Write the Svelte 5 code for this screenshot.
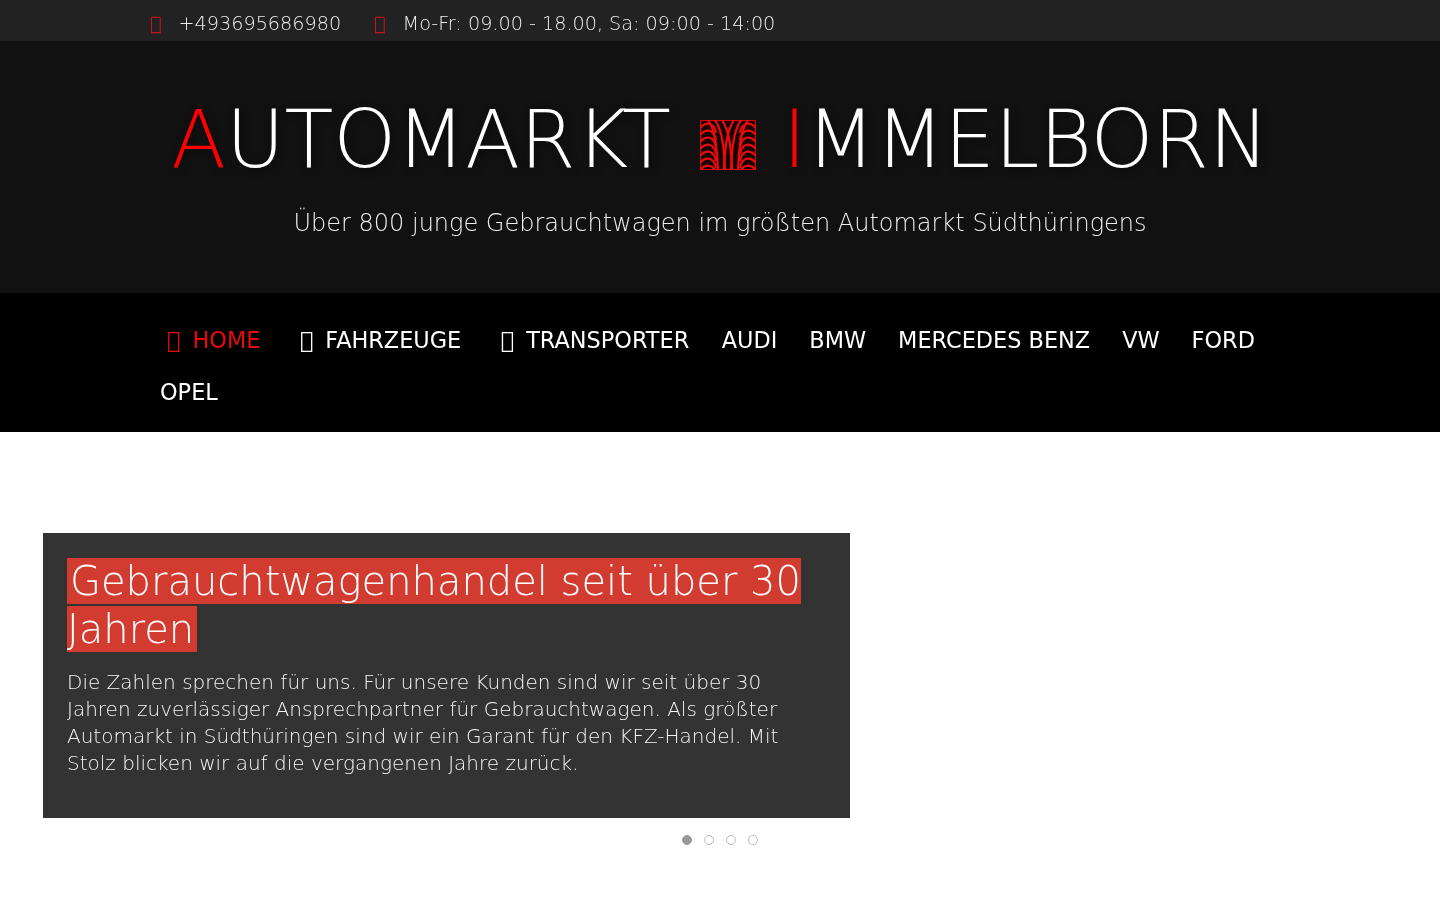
<script>
  const navItems = [
    { label: 'HOME', icon: '\uf015', active: true },
    { label: 'FAHRZEUGE', icon: '\uf1b9' },
    { label: 'TRANSPORTER', icon: '\uf0d1' },
    { label: 'AUDI' },
    { label: 'BMW' },
    { label: 'MERCEDES BENZ' },
    { label: 'VW' },
    { label: 'FORD' },
    { label: 'OPEL' }
  ];
  const dots = [0, 1, 2, 3];

  // arcs of the tyre tread in the logo, left half, mirrored in the markup
  const treadOuter = [4, 11, 18, 25, 32, 39, 46];
  const treadInner = [5, 12, 19];
</script>

<div class="topbar">
  <div class="container topbar-inner">
    <span class="info"><i class="icon">{'\uf095'}</i>+493695686980</span>
    <span class="info"><i class="icon">{'\uf017'}</i>Mo-Fr: 09.00 - 18.00, Sa: 09:00 - 14:00</span>
  </div>
</div>

<header class="masthead">
  <h1 class="brand">
    <span class="red">A</span>UTOMARKT
    <svg class="logo" viewBox="0 0 56 50" width="56" height="50" aria-hidden="true">
      <rect x="0.5" y="0.5" width="55" height="49" fill="#170303" stroke="#e00000" stroke-width="1" />
      <g fill="none" stroke="#ee0a0c" stroke-width="2.2">
        {#each treadOuter as y}
          <path d="M0 {y + 4} C6 {y - 3} 14 {y - 2} 16 {y + 9}" />
          <path d="M56 {y + 4} C50 {y - 3} 42 {y - 2} 40 {y + 9}" />
        {/each}
        {#each treadInner as x}
          <path d="M{x + 3} 0 C{x + 11} 12 {x + 12} 30 {x + 13} 50" />
          <path d="M{53 - x} 0 C{45 - x} 12 {44 - x} 30 {43 - x} 50" />
        {/each}
      </g>
    </svg>
    <span class="red">I</span>MMELBORN
  </h1>
  <p class="tagline">Über 800 junge Gebrauchtwagen im größten Automarkt Südthüringens</p>
</header>

<nav class="mainnav">
  <ul class="container">
    {#each navItems as item}
      <li class:active={item.active} class:has-icon={item.icon}>
        {#if item.icon}<i class="icon">{item.icon}</i>{/if}{item.label}
      </li>
    {/each}
  </ul>
</nav>

<section class="slider">
  <div class="slide">
    <h2><span>Gebrauchtwagenhandel seit über 30 Jahren</span></h2>
    <p>Die Zahlen sprechen für uns. Für unsere Kunden sind wir seit über 30 Jahren zuverlässiger Ansprechpartner für Gebrauchtwagen. Als größter Automarkt in Südthüringen sind wir ein Garant für den KFZ-Handel. Mit Stolz blicken wir auf die vergangenen Jahre zurück.</p>
  </div>
  <div class="dots">
    {#each dots as d}
      <span class="dot" class:current={d === 0}></span>
    {/each}
  </div>
</section>

<style>
  :global(body) {
    margin: 0;
    background: #fff;
    font-family: "DejaVu Sans", sans-serif;
  }

  /* own layer: the text gets greyscale antialiasing */
  :global(#app) {
    will-change: transform;
  }

  .container {
    width: 1140px;
    margin: 0 auto;
    box-sizing: border-box;
  }

  .icon {
    font-style: normal;
    font-family: "DejaVu Sans", sans-serif;
  }

  .topbar {
    background: #222;
    height: 41px;
  }

  .topbar-inner {
    display: flex;
    gap: 33px;
    height: 41px;
    font-size: 19.2px;
    line-height: 47px;
    font-weight: 200;
    color: #eee;
  }

  .info .icon {
    color: #c4151c;
    font-weight: 400;
    margin-right: 17px;
  }

  .masthead {
    background: #111;
    height: 252px;
    box-sizing: border-box;
    text-align: center;
    padding-top: 51px;
  }

  .brand {
    margin: 0;
    font-size: 80px;
    line-height: 96px;
    font-weight: 200;
    color: #fff;
    white-space: nowrap;
    text-shadow: 2px 2px 8px rgba(0, 0, 0, 0.4);
  }

  .red {
    color: #f00;
  }

  .logo {
    vertical-align: -3px;
    margin: 0 1px 0 4px;
  }

  .tagline {
    margin: 19px 0 0;
    font-size: 24px;
    line-height: 32px;
    font-weight: 200;
    color: #eee;
  }

  .mainnav {
    background: #000;
    height: 139px;
    box-sizing: border-box;
    padding-top: 21px;
  }

  .mainnav ul {
    display: flex;
    flex-wrap: wrap;
    list-style: none;
    padding: 0 10px;
    column-gap: 32px;
    margin: 0 auto;
  }

  .mainnav li {
    font-size: 22.4px;
    line-height: 52px;
    color: #fff;
    white-space: nowrap;
  }

  .mainnav li.has-icon {
    padding: 0 0.5px 0 7px;
  }

  .mainnav li .icon {
    margin-right: 12px;
  }

  .mainnav li.active {
    color: #e8090b;
  }

  .slider {
    padding-top: 101px;
  }

  .slide {
    width: 807px;
    height: 285px;
    margin-left: 43px;
    box-sizing: border-box;
    padding: 24px 24px;
    background: #333;
    color: #f5f5f5;
  }

  .slide h2 {
    margin: 0;
    font-size: 40px;
    line-height: 48px;
    font-weight: 200;
  }

  .slide h2 span {
    background: #d23b30;
    color: #fff;
    padding: 0 3px;
  }

  .slide p {
    margin: 16px 0 0;
    font-size: 20px;
    line-height: 27px;
    font-weight: 200;
  }

  .dots {
    display: flex;
    justify-content: center;
    gap: 12px;
    margin-top: 17px;
  }

  .dot {
    width: 10px;
    height: 10px;
    border-radius: 50%;
    box-sizing: border-box;
    border: 1px solid #bbb;
  }

  .dot.current {
    background: #999;
    border-color: #999;
  }
</style>
